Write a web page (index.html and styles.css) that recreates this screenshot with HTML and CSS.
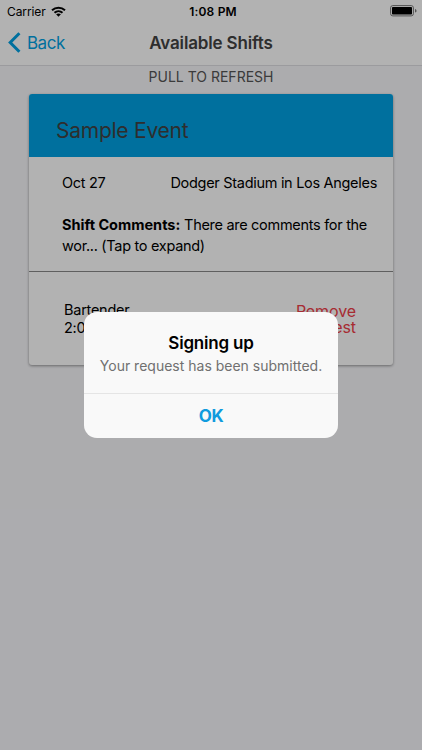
FILE: index.html
```
<!DOCTYPE html>
<html lang="en">
	<head>
		<meta charset="UTF-8" />
		<title>Available Shifts</title>
		<link rel="stylesheet" href="styles.css">
	</head>
	<body>
		<header>
			<div class="status-bar">
				<div class="carrier">
					<span class="carrier-name">Carrier</span>
					<svg class="wifi" viewBox="0 0 15 11" width="15" height="11">
						<g fill="none" stroke="#000" stroke-width="2">
							<path d="M1 4.2C4.7 .8 10.3 .8 14 4.2" />
							<path d="M3.5 6.7C5.8 4.6 9.2 4.6 11.5 6.7" />
						</g>
						<path d="M7.5 10.7L5.1 8.3C6.5 7.2 8.5 7.2 9.9 8.3Z" />
					</svg>
				</div>
				<span class="time">1:08 PM</span>
				<svg class="battery" viewBox="0 0 27 12" width="27" height="12">
					<rect x=".6" y=".6" width="22.8" height="10.3" rx="2.2" fill="none" stroke="#777" stroke-width="1" />
					<rect x="2" y="2" width="20" height="7.5" rx=".8" />
					<path d="M25 4C27 4.3 27 7.3 25 7.6Z" fill="#777" />
				</svg>
			</div>
			<nav>
				<a class="back" href="#">
					<svg viewBox="0 0 13 21" width="13" height="21">
						<path d="M11.4 1.2L2.2 10.5L11.4 19.8" fill="none" stroke="#00a1e3" stroke-width="3" />
					</svg>
					<span>Back</span>
				</a>
				<h1>Available Shifts</h1>
			</nav>
		</header>
		<main>
			<p class="refresh">PULL TO REFRESH</p>
			<div class="card">
				<h2>Sample Event</h2>
				<div class="details">
					<div class="place">
						<span>Oct 27</span>
						<span>Dodger Stadium in Los Angeles</span>
					</div>
					<p class="comments"><b>Shift Comments:</b> There are comments for the<br>wor... (Tap to expand)</p>
				</div>
				<div class="shift">
					<div class="role">Bartender<br>2:00 PM</div>
					<a class="remove" href="#">Remove<br>Request</a>
				</div>
			</div>
		</main>
		<div class="overlay">
			<div class="alert">
				<div class="alert-body">
					<h3>Signing up</h3>
					<p>Your request has been submitted.</p>
				</div>
				<button>OK</button>
			</div>
		</div>
	</body>
</html>
```
FILE: styles.css
```
* {
	margin: 0;
	padding: 0;
	box-sizing: border-box;
}
body {
	height: 750px;
	overflow: hidden;
	background-color: #f7f7fa;
	color: #000;
	font-family: Inter, "Liberation Sans", sans-serif;
	font-size: 14.5px;
}
a {
	text-decoration: none;
}
header {
	height: 66px;
	background-color: #fff;
	border-bottom: 1px solid #dedee2;
}
.status-bar {
	display: grid;
	grid-template-columns: 1fr auto 1fr;
	align-items: center;
	height: 22px;
	padding: 0 5px 0 7px;
}
.carrier {
	display: flex;
	align-items: center;
	gap: 5px;
}
.carrier-name {
	font-size: 12px;
	letter-spacing: -0.1px;
}
.time {
	padding-left: 2px;
	font-size: 12px;
	font-weight: 600;
	letter-spacing: 0.2px;
}
.battery {
	justify-self: end;
}
nav {
	display: grid;
	grid-template-columns: 1fr auto 1fr;
	align-items: center;
	height: 41px;
	padding: 0 8px;
}
.back {
	display: flex;
	align-items: center;
	gap: 6px;
	color: #00a1e3;
	font-size: 17px;
	letter-spacing: -0.5px;
}
h1 {
	color: #424242;
	font-size: 17px;
	font-weight: 600;
	letter-spacing: -0.15px;
}
.refresh {
	height: 28px;
	color: #555;
	font-size: 14px;
	line-height: 22px;
	text-align: center;
}
.card {
	width: 364px;
	height: 271px;
	margin: 0 auto;
	overflow: hidden;
	background-color: #fff;
	border-radius: 3px;
	box-shadow: 0 1px 3px rgba(0, 0, 0, 0.4);
}
h2 {
	height: 63px;
	padding: 10px 27px 0;
	background-color: #00a1e3;
	color: #424242;
	font-size: 21px;
	font-weight: 400;
	line-height: 54px;
	letter-spacing: -0.25px;
}
.details {
	height: 115px;
	padding: 16px 16px 0 33px;
	border-bottom: 1px solid #888;
	letter-spacing: -0.3px;
}
.place {
	display: flex;
	justify-content: space-between;
	line-height: 20px;
}
.comments {
	margin-top: 21px;
	line-height: 21px;
	white-space: nowrap;
}
.comments b {
	letter-spacing: 0;
}
.shift {
	display: flex;
	justify-content: space-between;
	padding: 29px 37px 0 35px;
	line-height: 18px;
}
.role {
	letter-spacing: -0.25px;
}
.remove {
	padding-top: 2px;
	color: #ef4049;
	font-size: 16px;
	line-height: 16px;
	letter-spacing: -0.1px;
	text-align: right;
}
.overlay {
	position: absolute;
	inset: 0;
	display: flex;
	align-items: center;
	justify-content: center;
	background-color: rgba(0, 0, 0, 0.3);
}
.alert {
	width: 254px;
	height: 126px;
	overflow: hidden;
	background-color: #f9f9f9;
	border-radius: 13px;
	text-align: center;
}
.alert-body {
	height: 82px;
	padding-top: 20px;
	border-bottom: 1px solid #e5e5e5;
	white-space: nowrap;
}
h3 {
	font-size: 17px;
	font-weight: 600;
	line-height: 22px;
	letter-spacing: -0.2px;
}
.alert p {
	color: #707070;
	font-size: 14px;
	line-height: 24px;
}
.alert button {
	width: 100%;
	height: 44px;
	border: none;
	background-color: transparent;
	color: #109bde;
	font-family: inherit;
	font-size: 17px;
	font-weight: 700;
	letter-spacing: -0.3px;
}
```
